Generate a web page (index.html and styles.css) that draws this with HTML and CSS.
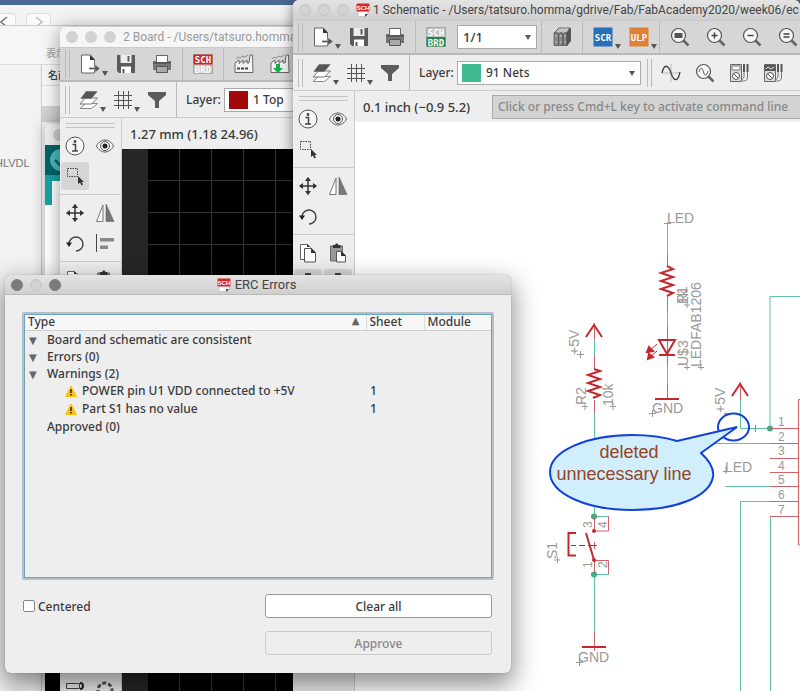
FILE: index.html
```html
<!DOCTYPE html>
<html lang="en">
<head>
  <meta charset="UTF-8">
  <meta name="viewport" content="width=device-width, initial-scale=1.0">
  <title>ERC Errors</title>
  <link rel="stylesheet" href="styles.css">
</head>
<body>

  <!-- icon set -->
  <svg class="defs" width="0" height="0" aria-hidden="true">
    <symbol id="i-file" viewBox="0 0 20 20">
      <path d="M1.5 1h9l4 4.500v13.500h-13z" fill="#fff" stroke="#666"/>
      <path d="M10 1l5 5h-5z" fill="#333"/>
      <path d="M9 13.500h6v-3l5 4-5 4v-3H9z" fill="#555" stroke="#ddd" stroke-width=".5"/>
    </symbol>
    <symbol id="i-save" viewBox="0 0 20 20">
      <path d="M1 1h18v18H3l-2-2z" fill="#5a5a5a"/>
      <path d="M4.500 1h11v8h-11z" fill="#eee"/>
      <path d="M11.500 2h2v5.500h-2z" fill="#5a5a5a"/>
      <path d="M5 12.500h10V19H5z" fill="#fff"/>
      <path d="M6.500 15h2v4h-2z" fill="#5a5a5a"/>
    </symbol>
    <symbol id="i-print" viewBox="0 0 20 20">
      <path d="M1 7h18v9H1z" fill="#777"/>
      <path d="M4.500 1.500h11v7h-11z" fill="#fff" stroke="#666"/>
      <path d="M1 9h18" stroke="#444"/>
      <path d="M4.500 12.500h11v6h-11z" fill="#aaa" stroke="#555"/>
    </symbol>
    <symbol id="i-schbrd" viewBox="0 0 20 20">
      <rect x=".5" y=".5" width="19" height="19" fill="#c4c4c4" stroke="#aaa"/>
      <rect x=".5" y=".5" width="19" height="10" fill="#c62a30"/>
      <text x="10" y="9" class="tag">SCH</text>
      <text x="10" y="18.500" class="tag">BRD</text>
    </symbol>
    <symbol id="i-brdsch" viewBox="0 0 20 20">
      <rect x=".5" y=".5" width="19" height="19" fill="#c4c4c4" stroke="#aaa"/>
      <rect x=".5" y="10" width="19" height="9.500" fill="#23854a"/>
      <text x="10" y="9" class="tag">SCH</text>
      <text x="10" y="18.500" class="tag">BRD</text>
    </symbol>
    <symbol id="i-factory" viewBox="0 0 20 20">
      <path d="M1 18.500V9l4-3v3.500l4-3.500v3.500l4-3.500v3h2l1-8h2.500l.5 17.500z" fill="#f2f2f2" stroke="#666"/>
      <path d="M3 14.500h11" stroke="#444" stroke-width="2" stroke-dasharray="3 1"/>
      <path d="M2 5l2-2 2 1 3-2 2 1 3-2" fill="none" stroke="#888"/>
    </symbol>
    <symbol id="i-factory-down" viewBox="0 0 20 20">
      <path d="M1 18.500V9l4-3v3.500l4-3.500v3.500l4-3.500v3h2l1-8h2.500l.5 17.500z" fill="#f2f2f2" stroke="#666"/>
      <path d="M2 5l2-2 2 1 3-2 2 1 3-2" fill="none" stroke="#888"/>
      <path d="M6 10h4v4h3l-5 5-5-5h3z" fill="#19a84a"/>
    </symbol>
    <symbol id="i-books" viewBox="0 0 20 20">
      <path d="M2 6l5-5h11l-3 5z" fill="#bbb" stroke="#666"/>
      <path d="M2 6h4.500v12.500H2zM6.500 6h4.500v12.500H6.500zM11 6h4v12.500h-4z" fill="#888" stroke="#555" stroke-width=".7"/>
      <path d="M15 6l3.500-5v13L15 18.500z" fill="#555" stroke="#444" stroke-width=".7"/>
      <path d="M3.500 9h1.500M8 9h1.500M12.500 9H14M3.500 15h1.500M8 15h1.500M12.500 15H14M6.500 6l5-5M11 6l4-5" stroke="#ddd"/>
    </symbol>
    <symbol id="i-scr" viewBox="0 0 20 20">
      <rect x=".5" y=".5" width="19" height="19" fill="#286fb9"/>
      <text x="10" y="13.500" class="tag">SCR</text>
    </symbol>
    <symbol id="i-ulp" viewBox="0 0 20 20">
      <rect x=".5" y=".5" width="19" height="19" fill="#de8036"/>
      <text x="10" y="13.500" class="tag">ULP</text>
    </symbol>
    <symbol id="i-lens" viewBox="0 0 20 20">
      <path d="M13 13l5.500 5.500" stroke="#666" stroke-width="2.500"/>
      <circle cx="8.500" cy="8.500" r="7" fill="#f7f7f7" stroke="#555" stroke-width="1.200"/>
    </symbol>
    <symbol id="i-fit" viewBox="0 0 20 20">
      <use href="#i-lens"/><path d="M4.500 6h8v5h-8z" fill="#555"/>
    </symbol>
    <symbol id="i-zoomin" viewBox="0 0 20 20">
      <use href="#i-lens"/><path d="M5.500 8.500h6M8.500 5.500v6" stroke="#444" stroke-width="1.500"/>
    </symbol>
    <symbol id="i-zoomout" viewBox="0 0 20 20">
      <use href="#i-lens"/><path d="M5.500 8.500h6" stroke="#444" stroke-width="1.500"/>
    </symbol>
    <symbol id="i-zoomeq" viewBox="0 0 20 20">
      <use href="#i-lens"/><path d="M5.500 7h6M5.500 10h6" stroke="#444" stroke-width="1.300"/>
    </symbol>
    <symbol id="i-layers" viewBox="0 0 20 20">
      <path d="M1 18.500l5.500-5h12l-6 5z" fill="#fff" stroke="#888"/>
      <path d="M1 14l5.500-6h12l-6 6z" fill="#fff" stroke="#777"/>
      <path d="M1 9l6-8h12l-6.500 8z" fill="#555" stroke="#eee" stroke-width=".5"/>
    </symbol>
    <symbol id="i-grid" viewBox="0 0 20 20">
      <path d="M5.500 1v18M10.500 1v18M15.500 1v18M1 5.500h18M1 10.500h18M1 15.500h18" stroke="#555"/>
    </symbol>
    <symbol id="i-filter" viewBox="0 0 20 20">
      <path d="M1 2h18v3l-7 6v7H8v-7L1 5z" fill="#5c5c5c"/>
    </symbol>
    <symbol id="i-sine" viewBox="0 0 20 20">
      <path d="M10 1v18M1 10h18" stroke="#bbb"/>
      <path d="M1 10C3 1 7 1 10 10s7 9 9-1" fill="none" stroke="#444" stroke-width="1.300"/>
    </symbol>
    <symbol id="i-probe" viewBox="0 0 20 20">
      <use href="#i-lens"/><path d="M4 9c1.500-5 3-5 4.500 0s3 4 4.500-1" fill="none" stroke="#555"/>
    </symbol>
    <symbol id="i-meter" viewBox="0 0 20 20">
      <path d="M1.500 1.500h11v17h-11z" fill="#ddd" stroke="#666"/>
      <path d="M3 3h8v4H3z" fill="#fff" stroke="#777"/>
      <circle cx="7" cy="13" r="3.500" fill="#fff" stroke="#555"/>
      <path d="M5 11l4 4" stroke="#444"/>
      <path d="M15 1v8M18.500 1v8" stroke="#555" stroke-width="2"/>
      <path d="M15 9v5l-3 4M18.500 9v6c0 3-4 3-6 3" fill="none" stroke="#777"/>
    </symbol>
    <symbol id="i-scope" viewBox="0 0 20 20">
      <use href="#i-meter"/>
      <path d="M2 2h10v6H2z" fill="#555"/><path d="M3 6l2-2 3 2 3-2" fill="none" stroke="#eee"/>
    </symbol>
    <symbol id="i-back" viewBox="0 0 20 20">
      <path d="M10 5l-7 5 7 5z" fill="#555"/>
    </symbol>
    <symbol id="i-info" viewBox="0 0 20 20">
      <circle cx="10" cy="10" r="9" fill="#f6f6f6" stroke="#555"/>
      <circle cx="10" cy="5.500" r="1.400" fill="#444"/>
      <path d="M7.500 8.500h3v6.500M7 15h6" fill="none" stroke="#444" stroke-width="1.500"/>
    </symbol>
    <symbol id="i-eye" viewBox="0 0 20 20">
      <path d="M1.500 10c4-8 13-8 17 0-4 8-13 8-17 0z" fill="#f6f6f6" stroke="#555"/>
      <circle cx="10" cy="10" r="4.500" fill="none" stroke="#555"/>
      <circle cx="10" cy="10" r="2.500" fill="#222"/>
    </symbol>
    <symbol id="i-group" viewBox="0 0 20 20">
      <path d="M2.500 2.500h10v8h-10z" fill="none" stroke="#444" stroke-dasharray="1.500 1"/>
      <path d="M13 10v8l2-1.500 1.500 3 1.500-1-1.500-2.500h2.500z" fill="#333"/>
    </symbol>
    <symbol id="i-move" viewBox="0 0 20 20">
      <path d="M10 3v14M3 10h14" stroke="#333" stroke-width="1.500"/>
      <path d="M10 .8l3 4.200H7zM10 19.200l3-4.200H7zM.8 10L5 7v6zM19.200 10L15 7v6z" fill="#333"/>
    </symbol>
    <symbol id="i-mirror" viewBox="0 0 20 20">
      <path d="M8 2v16.500H1.500z" fill="#fff" stroke="#777"/>
      <path d="M11 1l8 17.500h-8z" fill="#777" stroke="#555" stroke-width=".5"/>
    </symbol>
    <symbol id="i-rotate" viewBox="0 0 20 20">
      <path d="M4 10.500a7 7 0 1 1 7 7.500" fill="none" stroke="#444" stroke-width="1.500"/>
      <path d="M1 9.500h6L4 14z" fill="#222"/>
    </symbol>
    <symbol id="i-align" viewBox="0 0 20 20">
      <path d="M1.500 1v18" stroke="#444"/>
      <path d="M5 5h14v3.500H5zM5 12.500h8V16H5z" fill="#888"/>
    </symbol>
    <symbol id="i-copy" viewBox="0 0 20 20">
      <path d="M2.500 1.500h7l3 3v12h-10z" fill="#fff" stroke="#666"/>
      <path d="M6.500 5.500h7l4 4v9.500h-11z" fill="#fff" stroke="#555"/>
      <path d="M9 1l3 3H9zM13 5l5 5h-5z" fill="#333"/>
    </symbol>
    <symbol id="i-paste" viewBox="0 0 20 20">
      <path d="M2.500 3h12v15h-12z" fill="#999" stroke="#666"/>
      <path d="M5 2h2l1-1.500h1.500L10.500 2h2v3H5z" fill="#333"/>
      <path d="M8.500 8.500h5l4 4V19h-9z" fill="#fff" stroke="#555"/>
      <path d="M13 8l5 5h-5z" fill="#333"/>
    </symbol>
    <symbol id="i-part" viewBox="0 0 20 20">
      <path d="M7 0h6v3H7z" fill="#444"/>
    </symbol>
    <symbol id="i-via" viewBox="0 0 20 20">
      <path d="M1.500 3.500h13v5h-13z" fill="#eee" stroke="#444"/>
      <path d="M15 3c4 0 4 6 0 6" fill="none" stroke="#222" stroke-width="2"/>
    </symbol>
    <symbol id="i-ring" viewBox="0 0 20 20">
      <circle cx="10" cy="10" r="7" fill="none" stroke="#555" stroke-width="3" stroke-dasharray="4 2"/>
    </symbol>
    <symbol id="i-doc" viewBox="0 0 14 14">
      <path d="M2 8h10v3l-2.500 2.500H2z" fill="#fff" stroke="#bbb" stroke-width=".7"/>
      <path d="M9 14v-3h3z" fill="#444"/>
      <rect x=".5" y=".5" width="13" height="8" rx="1" fill="#d8272c"/>
      <text x="7" y="7" class="tag-small">SCH</text>
    </symbol>
    <symbol id="i-warn" viewBox="0 0 12 12">
      <path d="M6 1l5.500 10.500H.5z" fill="#fcc010" stroke="#fcc010" stroke-linejoin="round"/>
      <path d="M6 4v4M6 9v1.500" stroke="#222" stroke-width="1.500"/>
    </symbol>
  </svg>

  <div class="desktop">

    <!-- file browser windows at the back -->
    <div class="finder">
      <div class="finder-nav">
        <button type="button" aria-label="Back"><svg width="10" height="12" viewBox="0 0 10 12"><path d="M8 1L2 6l6 5" fill="none" stroke="#777" stroke-width="1.500"/></svg></button>
        <button type="button" aria-label="Forward"><svg width="10" height="12" viewBox="0 0 10 12"><path d="M2 1l6 5-6 5" fill="none" stroke="#bbb" stroke-width="1.500"/></svg></button>
      </div>
    </div>
    <div class="finder finder-front">
      <div class="finder-head"><span>表示</span></div>
      <div class="finder-body">
        <div class="finder-side">HLVDL</div>
        <div class="finder-list">
          <div class="finder-col">名前</div>
          <div class="finder-row"></div>
          <div class="finder-row selected"></div>
        </div>
      </div>
    </div>

    <div class="arduino">
      <div class="arduino-title"><i></i></div>
      <div class="arduino-bar"><svg width="26" height="26" viewBox="0 0 26 26"><circle cx="13" cy="13" r="11" fill="#4db7bb"/><path d="M7 13l5 5 8-10" fill="none" stroke="#006468" stroke-width="2.500"/></svg></div>
      <div class="arduino-tabs"></div>
      <div class="arduino-code"></div>
      <div class="arduino-console"></div>
    </div>

    <!-- board editor -->
    <section class="window board">
      <header class="titlebar">
        <i class="light"></i><i class="light"></i><i class="light"></i>
        <span class="title">2 Board - /Users/tatsuro.homma/gdrive/Fab/FabAcademy2020</span>
      </header>
      <div class="toolbar main">
        <span class="grip"></span>
        <button type="button" class="drop" aria-label="Open"><svg><use href="#i-file"/></svg></button>
        <button type="button" aria-label="Save"><svg><use href="#i-save"/></svg></button>
        <button type="button" aria-label="Print"><svg><use href="#i-print"/></svg></button>
        <span class="sep"></span>
        <button type="button" aria-label="Schematic"><svg><use href="#i-schbrd"/></svg></button>
        <span class="sep"></span>
        <button type="button" aria-label="CAM"><svg><use href="#i-factory"/></svg></button>
        <button type="button" aria-label="Manufacturing"><svg><use href="#i-factory-down"/></svg></button>
      </div>
      <div class="toolbar params">
        <span class="grip"></span>
        <button type="button" class="drop" aria-label="Layers"><svg><use href="#i-layers"/></svg></button>
        <button type="button" class="drop" aria-label="Grid"><svg><use href="#i-grid"/></svg></button>
        <button type="button" aria-label="Filter"><svg><use href="#i-filter"/></svg></button>
        <span class="sep"></span>
        <label for="board-layer">Layer:</label>
        <div class="combo layer"><i class="swatch top"></i><select id="board-layer"><option>1 Top</option></select></div>
      </div>
      <div class="work">
        <aside class="tools">
          <span class="tools-grip"></span>
          <div class="tool-group">
            <button type="button" aria-label="Info"><svg><use href="#i-info"/></svg></button>
            <button type="button" aria-label="Show"><svg><use href="#i-eye"/></svg></button>
            <button type="button" class="active" aria-label="Group"><svg><use href="#i-group"/></svg></button>
          </div>
          <div class="tool-group">
            <button type="button" aria-label="Move"><svg><use href="#i-move"/></svg></button>
            <button type="button" aria-label="Mirror"><svg><use href="#i-mirror"/></svg></button>
            <button type="button" aria-label="Rotate"><svg><use href="#i-rotate"/></svg></button>
            <button type="button" aria-label="Align"><svg><use href="#i-align"/></svg></button>
          </div>
          <div class="tool-group">
            <button type="button" aria-label="Copy"><svg><use href="#i-copy"/></svg></button>
            <button type="button" aria-label="Paste"><svg><use href="#i-paste"/></svg></button>
          </div>
          <div class="tool-group last">
            <button type="button" aria-label="Via"><svg><use href="#i-via"/></svg></button>
            <button type="button" aria-label="Ring"><svg><use href="#i-ring"/></svg></button>
          </div>
        </aside>
        <div class="view">
          <div class="status"><span>1.27 mm (1.18 24.96)</span></div>
          <div class="board-canvas"><div class="board-grid"></div></div>
        </div>
      </div>
    </section>

    <!-- schematic editor -->
    <section class="window schematic">
      <header class="titlebar">
        <i class="light"></i><i class="light"></i><i class="light"></i>
        <svg class="doc"><use href="#i-doc"/></svg>
        <span class="title">1 Schematic - /Users/tatsuro.homma/gdrive/Fab/FabAcademy2020/week06/ec</span>
      </header>
      <div class="toolbar main">
        <span class="grip"></span>
        <button type="button" class="drop" aria-label="Open"><svg><use href="#i-file"/></svg></button>
        <button type="button" aria-label="Save"><svg><use href="#i-save"/></svg></button>
        <button type="button" aria-label="Print"><svg><use href="#i-print"/></svg></button>
        <span class="sep"></span>
        <button type="button" aria-label="Board"><svg><use href="#i-brdsch"/></svg></button>
        <div class="combo sheet"><select aria-label="Sheet"><option>1/1</option></select></div>
        <span class="sep"></span>
        <button type="button" aria-label="Library"><svg><use href="#i-books"/></svg></button>
        <span class="sep"></span>
        <button type="button" class="drop" aria-label="Script"><svg><use href="#i-scr"/></svg></button>
        <button type="button" class="drop" aria-label="ULP"><svg><use href="#i-ulp"/></svg></button>
        <span class="sep"></span>
        <button type="button" aria-label="Fit"><svg><use href="#i-fit"/></svg></button>
        <button type="button" aria-label="Zoom in"><svg><use href="#i-zoomin"/></svg></button>
        <button type="button" aria-label="Zoom out"><svg><use href="#i-zoomout"/></svg></button>
        <button type="button" aria-label="Redraw"><svg><use href="#i-zoomeq"/></svg></button>
      </div>
      <div class="toolbar params">
        <span class="grip"></span>
        <button type="button" class="drop" aria-label="Layers"><svg><use href="#i-layers"/></svg></button>
        <button type="button" class="drop" aria-label="Grid"><svg><use href="#i-grid"/></svg></button>
        <button type="button" aria-label="Filter"><svg><use href="#i-filter"/></svg></button>
        <span class="sep"></span>
        <label for="sch-layer">Layer:</label>
        <div class="combo layer"><i class="swatch nets"></i><select id="sch-layer"><option>91 Nets</option></select></div>
        <span class="grip second"></span>
        <button type="button" aria-label="Simulate"><svg><use href="#i-sine"/></svg></button>
        <button type="button" aria-label="Probe"><svg><use href="#i-probe"/></svg></button>
        <button type="button" aria-label="Voltage"><svg><use href="#i-meter"/></svg></button>
        <button type="button" aria-label="Scope"><svg><use href="#i-scope"/></svg></button>
        <button type="button" aria-label="Previous"><svg><use href="#i-back"/></svg></button>
      </div>
      <div class="work">
        <aside class="tools">
          <span class="tools-grip"></span>
          <div class="tool-group">
            <button type="button" aria-label="Info"><svg><use href="#i-info"/></svg></button>
            <button type="button" aria-label="Show"><svg><use href="#i-eye"/></svg></button>
            <button type="button" aria-label="Group"><svg><use href="#i-group"/></svg></button>
          </div>
          <div class="tool-group">
            <button type="button" aria-label="Move"><svg><use href="#i-move"/></svg></button>
            <button type="button" aria-label="Mirror"><svg><use href="#i-mirror"/></svg></button>
            <button type="button" aria-label="Rotate"><svg><use href="#i-rotate"/></svg></button>
          </div>
          <div class="tool-group">
            <button type="button" aria-label="Copy"><svg><use href="#i-copy"/></svg></button>
            <button type="button" aria-label="Paste"><svg><use href="#i-paste"/></svg></button>
            <button type="button" class="active" aria-label="Delete"><svg><use href="#i-part"/></svg></button>
            <button type="button" class="active" aria-label="Add part"><svg><use href="#i-part"/></svg></button>
          </div>
        </aside>
        <div class="view">
          <div class="status">
            <span>0.1 inch (−0.9 5.2)</span>
            <input type="text" aria-label="Command line" placeholder="Click or press Cmd+L key to activate command line">
          </div>
          <div class="sch-canvas">
            <svg class="drawing" width="445" height="569" viewBox="355 122 445 569">
              <!-- nets -->
              <g class="net">
                <path d="M667.500 222v35M667.500 309v20M667.500 366v20M594.500 339v18M594.500 412v104M594.500 574v60"/>
                <path d="M740.500 398v30.500H770V296.500h30M700 443.500h70M725 486.500h45M740.500 691V501.500H770M770.500 691V516.500"/>
                <path d="M594 516.500h15M594 574.500h15"/>
              </g>
              <g class="net-dot">
                <circle cx="594" cy="516.500" r="3"/><circle cx="594" cy="574.500" r="3"/><circle cx="770" cy="428.500" r="3"/>
              </g>
              <!-- pins -->
              <g class="pin">
                <path d="M667.500 254v13M667.500 297v14M667.500 326v40M667.500 384v15M594.500 323v17M594.500 355v14M594.500 400v14M740.500 382v17"/>
                <path d="M770 428.500h29M770 443.500h29M770 458.500h29M770 472.500h29M770 486.500h29M770 501.500h29M770 516.500h29"/>
                <path d="M800 399.500h-1.500V545H800M755.500 425v7"/>
                <path d="M594.500 516v15M594.500 560v14M608.500 516v15H594M594 560.500h14.500V574M594.500 632v19M594.500 542v7"/>
              </g>
              <!-- parts -->
              <g class="part">
                <path d="M667 266l6 3-12 4 12 4-12 4 12 4-12 4 12 4-6 3"/>
                <path d="M594 369l6 2-12 4 12 4-12 4 12 4-12 4 12 4-7 3"/>
                <path d="M586 337l8-12 8 12M732 396l8-12 8 12M655 399h24M582 647h24"/>
                <path d="M659 340h16l-8 14zM659 355h16"/>
                <path d="M576 533h-7.500v22.500h7.500M586 533l8 27"/>
                <path class="thin" d="M571 545.500h5M579 545.500h6M588 545.500h9"/>
                <path class="thin" d="M657 344l-8 7M657 351l-8 7"/>
                <path class="solid" d="M647 352l2-5 4 4zM648 359l1-5 4 3z"/>
                <circle class="solid" cx="594" cy="531" r="1"/><circle class="solid" cx="594" cy="560" r="1"/>
              </g>
              <!-- origin marks -->
              <path class="mark" d="M664 223.500h7M684 305h6M687 302v6M577 354.500h7M580.500 351v7M684 367.500h6M687 364v6M698 367.500h6M701 364v6M649 413.500h7M652.500 410v7M582 406.500h6M585 403v7M610 406.500h6M613 403v7M723 471.500h6M726 466v8M554 560h6M557.500 557v6M576 662.500h7M579.500 659v7M724 413.500h6"/>
              <g class="name">
                <text x="667" y="223">LED</text>
                <text x="652" y="413">GND</text>
                <text x="578" y="662">GND</text>
                <text x="725" y="472">LED</text>
                <text transform="translate(579 355) rotate(-90)">+5V</text>
                <text transform="translate(725 413) rotate(-90)">+5V</text>
                <text transform="translate(586 405) rotate(-90)">R2</text>
                <text transform="translate(613 406) rotate(-90)">10k</text>
                <text transform="translate(687 304) rotate(-90)">R1</text>
                <text transform="translate(688 304) rotate(-90)">1k</text>
                <text transform="translate(688 366) rotate(-90)">U$3</text>
                <text transform="translate(701 367) rotate(-90)">LEDFAB1206</text>
                <text transform="translate(557 559) rotate(-90)">S1</text>
              </g>
              <g class="pin-name">
                <text x="778" y="426">1</text><text x="778" y="441">2</text><text x="778" y="455">3</text>
                <text x="778" y="470">4</text><text x="778" y="484">5</text><text x="778" y="499">6</text>
                <text x="778" y="514">7</text>
                <text transform="translate(592 528) rotate(-90)">3</text>
                <text transform="translate(607 528) rotate(-90)">4</text>
                <text transform="translate(592 568) rotate(-90)">1</text>
                <text transform="translate(607 568) rotate(-90)">2</text>
              </g>
              <!-- note -->
              <g class="note">
                <ellipse class="ring" cx="733.500" cy="427" rx="15.500" ry="13.500"/>
                <path d="M677 441L737 427L701 453C712 463 714 471 713 477C709 497 676 510 632 510C587 510 550 494 550 472C550 451 587 435 632 435C648 435 664 437 677 441z"/>
                <text x="629" y="458">deleted</text>
                <text x="624" y="480">unnecessary line</text>
              </g>
            </svg>
          </div>
        </div>
      </div>
    </section>

    <!-- ERC dialog -->
    <section class="window dialog">
      <header class="titlebar">
        <i class="light on"></i><i class="light"></i><i class="light on"></i>
        <span class="title"><svg class="doc"><use href="#i-doc"/></svg>ERC Errors</span>
      </header>
      <div class="dialog-body">
        <div class="list">
          <table>
            <thead>
              <tr><th class="type"><div>Type <span class="sort">▲</span></div></th><th class="sheet-col">Sheet</th><th>Module</th></tr>
            </thead>
            <tbody>
              <tr><td><span class="tree">▼</span>Board and schematic are consistent</td><td></td><td></td></tr>
              <tr><td><span class="tree">▼</span>Errors (0)</td><td></td><td></td></tr>
              <tr><td><span class="tree">▼</span>Warnings (2)</td><td></td><td></td></tr>
              <tr class="item"><td><svg class="warn"><use href="#i-warn"/></svg>POWER pin U1 VDD connected to +5V</td><td>1</td><td></td></tr>
              <tr class="item"><td><svg class="warn"><use href="#i-warn"/></svg>Part S1 has no value</td><td>1</td><td></td></tr>
              <tr><td><span class="tree"></span>Approved (0)</td><td></td><td></td></tr>
            </tbody>
          </table>
        </div>
        <div class="actions">
          <label class="check"><input type="checkbox">Centered</label>
          <div class="buttons">
            <button type="button">Clear all</button>
            <button type="button" disabled>Approve</button>
          </div>
        </div>
      </div>
    </section>

  </div>

</body>
</html>
```
FILE: styles.css
```css
* {
  margin: 0;
  padding: 0;
  box-sizing: border-box;
}

body {
  font-family: "Noto Sans", "Noto Sans CJK JP", sans-serif;
  font-size: 12px;
  font-weight: 500;
  color: #3a3a3a;
}

button, input, select {
  font: inherit;
  color: inherit;
}

.defs {
  position: absolute;
}

.desktop {
  position: relative;
  height: 100vh;
  min-height: 400px;
  overflow: hidden;
  background: #496a93;
}

.tag {
  font: bold 9px "DejaVu Sans Mono", monospace;
  fill: #fff;
  text-anchor: middle;
}

.tag-small {
  font: bold 6px "Liberation Sans", sans-serif;
  fill: #fff;
  text-anchor: middle;
}

/* file browser */
.finder {
  position: absolute;
  top: 5px;
  left: 0;
  width: 330px;
  bottom: 0;
  background: #f3f3f3;
}

.finder-nav {
  display: flex;
  gap: 10px;
  padding-top: 8px;
}

.finder-nav button {
  width: 25px;
  height: 20px;
  margin-left: -9px;
  border: 1px solid #ddd;
  border-radius: 4px;
  background: #fafafa;
}

.finder-nav button + button {
  margin-left: 0;
}

.finder-front {
  top: 25px;
  border-top: 1px solid #ccc;
  background: #f6f6f6;
}

.finder-head {
  height: 39px;
  padding: 20px 0 0 46px;
  border-bottom: 1px solid #ddd;
  color: #aaa;
  font-size: 10px;
  line-height: 14px;
}

.finder-body {
  display: flex;
  height: 100%;
}

.finder-side {
  width: 42px;
  padding: 92px 0 0 0;
  border-right: 1px solid #ccc;
  background: #f2f2f2;
  font: 11px "Liberation Sans", sans-serif;
  color: #777;
  text-indent: -5px;
}

.finder-list {
  flex: 1;
}

.finder-col {
  height: 21px;
  padding-left: 6px;
  border-bottom: 1px solid #ddd;
  font-size: 10px;
  line-height: 20px;
}

.finder-row {
  height: 20px;
  background: #f7f7f7;
}

.finder-row.selected {
  height: 16px;
  background: #d2d2d2;
}

/* code editor */
.arduino {
  position: absolute;
  display: flex;
  flex-direction: column;
  top: 124px;
  left: 45px;
  width: 120px;
  bottom: 0;
  border-radius: 5px 5px 0 0;
  overflow: hidden;
  background: #fff;
  box-shadow: 0 0 14px rgba(0, 0, 0, .3);
}

.arduino-title {
  height: 21px;
  padding: 5px 8px;
  background: #eee;
}

.arduino-title i {
  display: block;
  width: 12px;
  height: 12px;
  border-radius: 50%;
  background: #ccc;
}

.arduino-bar {
  height: 30px;
  padding: 2px 3px;
  background: #006468;
}

.arduino-tabs {
  height: 30px;
  border-left: 7px solid #17a1a5;
  border-top: 6px solid #17a1a5;
  background: #fff;
}

.arduino-code {
  flex: 1;
}

.arduino-console {
  height: 100px;
  background: #000;
}

/* windows */
.window {
  position: absolute;
  display: flex;
  flex-direction: column;
  overflow: hidden;
  background: #eee;
  border-radius: 6px 6px 0 0;
}

.board {
  top: 27px;
  left: 60px;
  right: 300px;
  bottom: 0;
  box-shadow: 0 2px 18px rgba(0, 0, 0, .4);
}

.schematic {
  top: 0;
  left: 293px;
  right: 0;
  bottom: 0;
  box-shadow: 0 0 14px rgba(0, 0, 0, .5);
}

.titlebar {
  display: flex;
  flex: none;
  align-items: center;
  gap: 7px;
  height: 20px;
  padding-left: 6px;
  background: #f6f6f6;
  font: 12px Roboto, sans-serif;
  color: #999;
  white-space: nowrap;
}

.light {
  flex: none;
  width: 12px;
  height: 12px;
  border-radius: 50%;
  background: #d2d2d2;
}

.schematic .titlebar,
.dialog .titlebar {
  background: linear-gradient(#e4e4e4, #cfcfcf);
  color: #444;
}

.schematic .light,
.dialog .light {
  background: #d2d2d2;
  border: 1px solid #c2c2c2;
}

.dialog .light.on {
  background: #7b7b7d;
  border-color: #7b7b7d;
}

.doc {
  flex: none;
  width: 14px;
  height: 14px;
}

.schematic .titlebar .title {
  margin-left: -4px;
}

.toolbar {
  display: flex;
  flex: none;
  align-items: center;
  height: 35px;
  overflow: hidden;
}

.toolbar.main {
  background: #d6d6d6;
  border-top: 1px solid #cacaca;
  border-bottom: 2px solid #bababa;
}

.toolbar.params {
  background: #eee;
  height: 36px;
  border-bottom: 1px solid #ccc;
}

.toolbar button,
.tools button {
  position: relative;
  display: flex;
  flex: none;
  align-items: center;
  justify-content: center;
  border: 0;
  background: none;
}

.toolbar button {
  width: 36px;
  height: 32px;
}

.toolbar.params button {
  width: 34px;
}

.toolbar button svg,
.tools button svg {
  width: 20px;
  height: 20px;
}

.toolbar .drop::after {
  content: "";
  position: absolute;
  right: 0;
  bottom: 4px;
  border: 3px solid transparent;
  border-top: 5px solid #555;
  border-bottom: 0;
}

.grip {
  flex: none;
  width: 5px;
  height: 28px;
  margin: 0 2px 0 5px;
  border: solid #bbb;
  border-width: 0 1px;
}

.sep {
  flex: none;
  width: 1px;
  height: 100%;
  margin: 0 2px;
  background: #bbb;
}

.toolbar label {
  flex: none;
  width: 45px;
  padding-left: 7px;
}

.combo {
  display: flex;
  flex: none;
  align-items: center;
  position: relative;
  height: 24px;
  border: 1px solid #aaa;
  background: #fff;
}

.combo::after {
  content: "";
  position: absolute;
  right: 5px;
  top: 9px;
  border: 3px solid transparent;
  border-top: 5px solid #555;
  border-bottom: 0;
}

.combo select {
  flex: 1;
  height: 100%;
  border: 0;
  padding-left: 5px;
  background: none;
  appearance: none;
}

.combo.sheet {
  width: 80px;
  margin: 0 2px 0 3px;
  font-size: 13px;
}

.combo.layer {
  width: 184px;
}

.swatch {
  flex: none;
  width: 19px;
  height: 18px;
  margin-left: 4px;
  background: #3fb98f;
}

.swatch.top {
  background: #a30808;
}

.grip.second {
  margin: 0 2px 0 6px;
}

.work {
  display: flex;
  flex: 1;
  min-height: 0;
}

.tools {
  display: flex;
  flex-direction: column;
  flex: none;
  width: 62px;
  border-right: 1px solid #ccc;
  overflow: hidden;
}

.tools-grip {
  flex: none;
  height: 5px;
  margin: 5px 6px 0;
  border: solid #c4c4c4;
  border-width: 1px 0;
}

.tool-group {
  display: grid;
  grid-template-columns: 30px 30px;
  padding: 3px 0 3px 0;
  border-bottom: 1px solid #ccc;
}

.tools button {
  height: 30px;
}

.tools .active::before {
  content: "";
  position: absolute;
  inset: 1px;
  border-radius: 3px;
  background: #d6d6d6;
  z-index: -1;
}

.tools button.active {
  z-index: 0;
}

.tool-group.last {
  margin-top: auto;
  padding: 0;
  margin-bottom: -14px;
  border: 0;
}

.view {
  display: flex;
  flex-direction: column;
  flex: 1;
  min-width: 0;
}

.status {
  display: flex;
  flex: none;
  align-items: center;
  height: 31px;
  padding-left: 8px;
  white-space: nowrap;
}

.status span {
  width: 129px;
  font-size: 13px;
}

.status input {
  flex: 1;
  min-width: 0;
  height: 24px;
  padding-left: 5px;
  border: 1px solid #aaa;
  border-right: 0;
  background: #d3d3d3;
}

.status input::placeholder {
  color: #888;
  opacity: 1;
}

.board-canvas {
  flex: 1;
  padding-left: 26px;
  background: #262626;
}

.board-grid {
  height: 100%;
  background:
    repeating-linear-gradient(90deg, transparent 0 31px, #333 31px 32px),
    repeating-linear-gradient(transparent 0 31px, #333 31px 32px),
    #000;
}

.sch-canvas {
  flex: 1;
  overflow: hidden;
  background: #fff;
}

/* schematic drawing */
.drawing {
  display: block;
}

.net {
  fill: none;
  stroke: #5fc3a4;
}

.net-dot {
  fill: #35b48a;
}

.pin {
  fill: none;
  stroke: #d26268;
}

.part {
  fill: none;
  stroke: #c4282e;
  stroke-width: 2;
}

.part .thin {
  stroke-width: 1;
}

.part .solid {
  fill: #c4282e;
}

.mark {
  fill: none;
  stroke: #999;
}

.name {
  font: 14px "Liberation Sans", sans-serif;
  fill: #999;
}

.pin-name {
  font: 12px "Liberation Sans", sans-serif;
  fill: #999;
}

.note path,
.note .ring {
  fill: #d0eefb;
  stroke: #1240dc;
  stroke-width: 2;
}

.note .ring {
  fill: none;
}

.note text {
  font: 18px "Liberation Sans", sans-serif;
  fill: #98431f;
  text-anchor: middle;
}

/* ERC dialog */
.dialog {
  top: 275px;
  left: 5px;
  width: 506px;
  border-radius: 6px;
  box-shadow: 0 10px 26px 2px rgba(0, 0, 0, .45), 0 0 1px rgba(0, 0, 0, .5);
}

.dialog .titlebar {
  border-bottom: 1px solid #bbb;
  font-size: 13px;
}

.dialog .title {
  display: flex;
  flex: 1;
  align-items: center;
  justify-content: center;
  gap: 4px;
  padding-right: 66px;
}

.dialog-body {
  padding: 17px 17px 18px;
}

.list {
  height: 268px;
  border: 2px solid #b5c0c6;
  border-radius: 2px;
  outline: 1px solid #6ba3c2;
  outline-offset: -3px;
  padding: 0 1px;
}

table {
  width: 100%;
  border-collapse: collapse;
  table-layout: fixed;
}

th {
  height: 16px;
  padding-left: 3px;
  border-bottom: 1px solid #ccc;
  background: #f7f7f7;
  font-weight: 500;
  line-height: 15px;
  text-align: left;
}

th + th {
  border-left: 1px solid #ddd;
}

th.type {
  width: 341px;
}

th.type div {
  display: flex;
  justify-content: space-between;
  padding-right: 6px;
}

.sheet-col {
  width: 58px;
}

.sort,
.tree {
  font: 10px/14px "DejaVu Sans", sans-serif;
  color: #666;
}

.tree {
  display: inline-block;
  width: 18px;
}

td {
  padding-left: 4px;
  line-height: 17px;
  white-space: nowrap;
}

.item td {
  line-height: 18px;
}

.item td:first-child {
  padding-left: 40px;
}

.warn {
  width: 12px;
  height: 12px;
  margin-right: 5px;
  vertical-align: -2px;
}

.actions {
  display: flex;
  align-items: flex-start;
  justify-content: space-between;
  padding: 14px 2px 0 1px;
}

.check {
  display: flex;
  align-items: center;
  gap: 3px;
  height: 24px;
}

.check input {
  appearance: none;
  width: 12px;
  height: 12px;
  border: 1px solid #888;
  border-radius: 2px;
  background: #fff;
}

.buttons {
  display: flex;
  flex-direction: column;
  gap: 13px;
  width: 227px;
}

.buttons button {
  height: 24px;
  border: 1px solid #999;
  border-radius: 3px;
  background: #fff;
}

.buttons button:disabled {
  border-color: #ccc;
  background: #ededed;
  color: #888;
}
```
